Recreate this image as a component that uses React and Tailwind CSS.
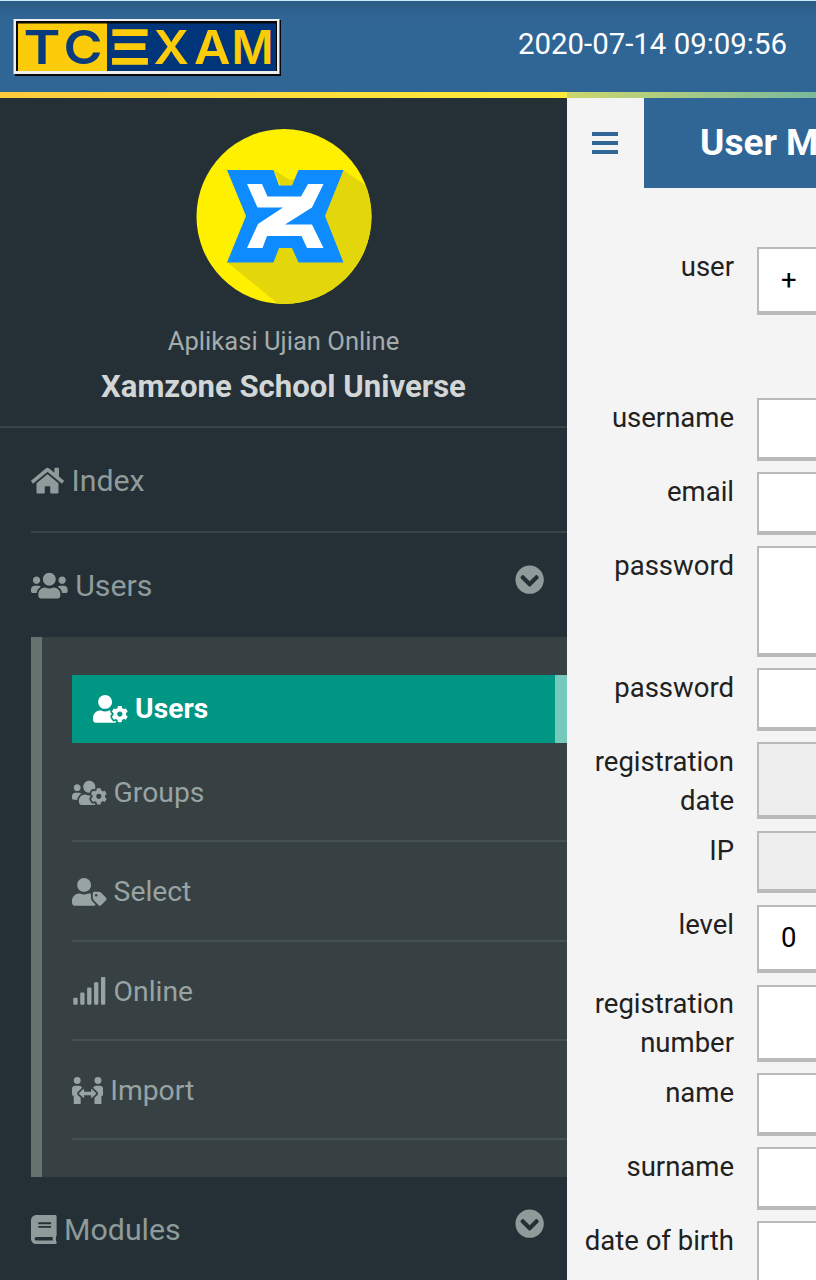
import React from "react";
import {
  FaHome,
  FaUsers,
  FaUserCog,
  FaUsersCog,
  FaUserTag,
  FaSignal,
  FaPeopleArrows,
  FaBook,
  FaChevronCircleDown,
} from "react-icons/fa";

const letters = [
  ["T", 23.5, 37, "#073b7d", 0],
  ["C", 63.5, 39, "#073b7d", 0],
  ["Ξ", 109.5, 41, "#fccb0a", 1.6],
  ["X", 153.5, 35.5, "#fccb0a", 0],
  ["A", 194, 36.5, "#fccb0a", 0],
  ["M", 231.5, 42, "#fccb0a", 0],
];

function Logo() {
  return (
    <svg className="ml-3 mt-[18px] block h-[58px] w-[270px]" viewBox="12 18 270 58">
      <rect x="15" y="20" width="266" height="56" fill="#06080c" />
      <rect x="13.5" y="19" width="266" height="55" fill="#eeeeee" />
      <rect x="16" y="21" width="261" height="50" fill="#06080c" />
      <rect x="18" y="23.5" width="89" height="47.5" fill="#fccb0a" />
      <rect x="107" y="23.5" width="169" height="47.5" fill="#003579" />
      {letters.map(([ch, x, w, fill, stroke]) => (
        <text
          key={ch}
          x={x}
          y="64.3"
          fill={fill}
          stroke={fill}
          strokeWidth={stroke}
          textLength={w}
          lengthAdjust="spacingAndGlyphs"
          className="font-['Inter',sans-serif] text-[47px] font-semibold"
        >
          {ch}
        </text>
      ))}
    </svg>
  );
}

function Emblem() {
  return (
    <svg className="h-[176px] w-[176px]" viewBox="196 129 176 176">
      <defs>
        <clipPath id="disc">
          <circle cx="284" cy="216.500" r="87.500" />
        </clipPath>
      </defs>
      <g clipPath="url(#disc)">
        <rect x="196" y="128" width="176" height="178" fill="#fff000" />
        <path d="M343 170L420 222V330H310L227 262L300 230L274 170L290 180Z" fill="#e3d60b" />
      </g>
      <path
        d="M227 170H273.500L279 185.500H292L298.500 170H343.500L325 216L343.500 262.500H298.500L292 248H279L273.500 262.500H227L246 216Z"
        fill="#0d8bff"
      />
      <path
        d="M247 184H262L267.500 196.500H301L308 184H323.500L312 207.500L285 224.500H312L323.500 248H307L301.500 236H267L262.500 248H247L258 224L283 207.500H257.500Z"
        fill="#fff"
      />
    </svg>
  );
}

function SubItem({ icon: Icon, size, label }) {
  return (
    <div className="flex h-[99.300px] items-center gap-[7px] border-b-2 border-[#465154] pt-[2px] text-[28.300px] text-[#98a3a3]">
      <Icon className={`h-[27.700px] shrink-0 ${size}`} />
      <span className="pt-[1.500px]">{label}</span>
    </div>
  );
}

const fields = [
  { label: "user", h: "h-[68px]", gap: "mb-[83px]", value: "+" },
  { label: "username", h: "h-[62.500px]" },
  { label: "email", h: "h-[62.500px]" },
  { label: "password", h: "h-[110.500px]" },
  { label: "password", h: "h-[62.500px]" },
  { label: "registration date", h: "h-[77px]", off: true },
  { label: "IP", h: "h-[62.500px]", off: true },
  { label: "level", h: "h-[68px]", value: "0" },
  { label: "registration number", h: "h-[77px]" },
  { label: "name", h: "h-[62.500px]" },
  { label: "surname", h: "h-[62.500px]" },
  { label: "date of birth", h: "h-[77px]" },
];

export default function App() {
  return (
    <div className="flex h-[1280px] w-[816px] flex-col overflow-hidden bg-[#f4f4f4] font-['Roboto',sans-serif]">
      <header className="flex h-[92px] shrink-0 justify-between border-t border-[#c8eefa] bg-linear-to-b from-[#2b5c84] to-[#306696] to-20%">
        <div className="-mt-px">
          <Logo />
        </div>
        <div className="mr-[29px] mt-[22px] text-[29.400px] leading-[42px] text-white">2020-07-14 09:09:56</div>
      </header>
      <div className="flex h-[6px] shrink-0">
        <div className="w-[567px] bg-linear-to-r from-[#fccb3c] to-[#ffeb3b]" />
        <div className="flex-1 bg-linear-to-r from-[#ccd76b] to-[#79b99c]" />
      </div>

      <div className="flex min-h-0 flex-1">
        <aside className="flex w-[567px] shrink-0 flex-col overflow-hidden bg-[#243036] text-[#8f9b9b]">
          <div className="flex h-[330px] shrink-0 flex-col items-center border-b-2 border-[#364545] pt-[30.500px]">
            <Emblem />
            <div className="mt-[17px] text-[25.600px] leading-[38px] text-[#a5acac]">Aplikasi Ujian Online</div>
            <div className="mt-[8.500px] text-[31.100px] font-bold leading-[38px] text-[#d3d6d7]">Xamzone School Universe</div>
          </div>

          <div className="ml-[31px] flex h-[105px] shrink-0 items-center gap-[7.500px] border-b-2 border-[#364545] pt-[3px] text-[30.300px]">
            <FaHome className="h-[29.300px] w-[33px] shrink-0" />
            <span>Index</span>
          </div>
          <div className="ml-[31px] flex h-[104px] shrink-0 items-center gap-[7.500px] pt-[2px] text-[30.300px]">
            <FaUsers className="h-[29.300px] w-[36.700px] shrink-0" />
            <span>Users</span>
            <FaChevronCircleDown className="mb-[13px] ml-auto mr-[23px] h-[29.300px] w-[29.300px]" />
          </div>

          <div className="ml-[31px] h-[540px] shrink-0 border-l-[11px] border-[#66726f] bg-[#374143] pl-[30px] pt-[38px]">
            <div className="flex h-[68px] items-center gap-[7.500px] border-r-[12px] border-[#75c9bd] bg-[#009684] pl-[21px] text-[28.200px] font-bold text-white">
              <FaUserCog className="h-[27.700px] w-[34.600px] shrink-0" />
              <span>Users</span>
            </div>
            <SubItem icon={FaUsersCog} size="w-[34.600px]" label="Groups" />
            <SubItem icon={FaUserTag} size="w-[34.600px]" label="Select" />
            <SubItem icon={FaSignal} size="w-[34.600px]" label="Online" />
            <SubItem icon={FaPeopleArrows} size="w-[31.200px]" label="Import" />
          </div>

          <div className="ml-[31px] flex h-[105px] shrink-0 items-center gap-[7.500px] text-[30.300px]">
            <FaBook className="h-[29.300px] w-[25.600px] shrink-0" />
            <span>Modules</span>
            <FaChevronCircleDown className="mb-[12px] ml-auto mr-[23px] h-[29.300px] w-[29.300px]" />
          </div>
        </aside>

        <main className="min-w-0 flex-1">
          <div className="flex h-[90px]">
            <div className="flex w-[77px] shrink-0 flex-col items-center justify-center gap-[5px] pr-[1px]">
              <div className="h-[4px] w-[26px] bg-[#306696]" />
              <div className="h-[4px] w-[26px] bg-[#306696]" />
              <div className="h-[4px] w-[26px] bg-[#306696]" />
            </div>
            <h1 className="flex-1 overflow-hidden whitespace-nowrap bg-[#306696] pl-[56px] text-[37px] font-bold leading-[89px] text-white">
              User M
            </h1>
          </div>
          <form className="pt-[59px]">
            {fields.map((f, i) => (
              <div key={i} className={`flex gap-[23px] ${f.h} ${f.gap || "mb-[11.600px]"}`}>
                <label className="w-[167px] shrink-0 pl-[10px] pt-[0.700px] text-right text-[27.500px] leading-[38.500px] text-[#212121]">
                  {f.label}
                </label>
                <div
                  className={`flex h-full w-[300px] shrink-0 items-center border-2 border-b-4 border-[#bababa] pl-[22px] text-[27.500px] text-black ${f.off ? "bg-[#eeeeee]" : "bg-white"}`}
                >
                  {f.value}
                </div>
              </div>
            ))}
          </form>
        </main>
      </div>
    </div>
  );
}
